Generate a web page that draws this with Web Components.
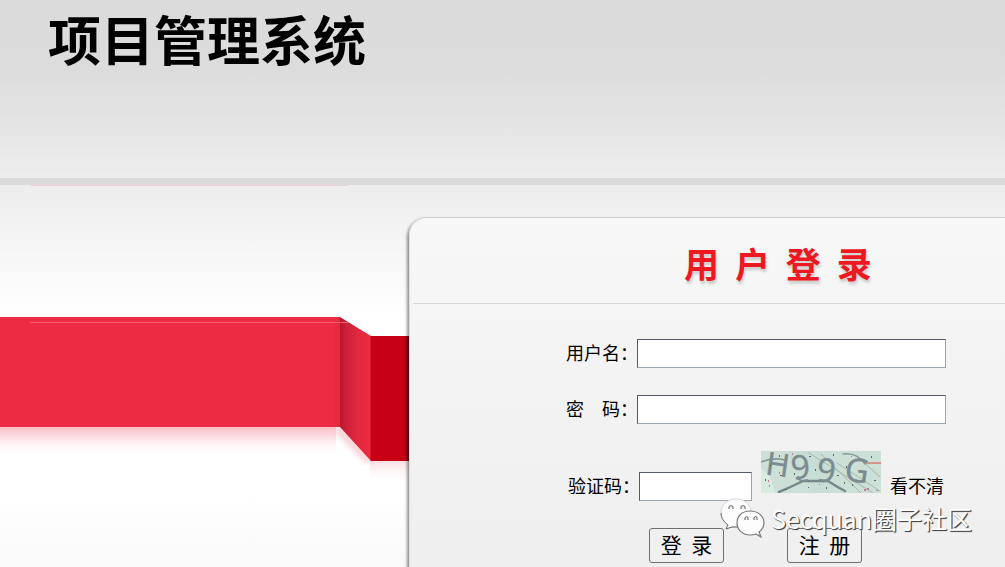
<!DOCTYPE html>
<html lang="zh-CN">
<head>
<meta charset="utf-8">
<title>项目管理系统</title>
<style>
html,body{margin:0;height:100%}
body{font-family:"Noto Sans CJK SC","Liberation Sans",sans-serif;color:#000;overflow:hidden}
</style>
</head>
<body>
<login-page></login-page>

<template id="t-page">
<style>
:host{display:flex;flex-direction:column;min-height:100vh}
main{flex:1;display:grid;grid-template-columns:409px minmax(0,1fr);background:linear-gradient(#ededed,#fff 130px,#fff 310px,#f9f9f9 382px)}
login-card{margin-top:32px}
</style>
<site-header>项目管理系统</site-header>
<main><red-ribbon></red-ribbon><login-card></login-card></main>
</template>

<template id="t-header">
<style>
:host{display:block;box-sizing:border-box;height:185px;padding:0 48px;border-bottom:7px solid #dadada;background:linear-gradient(#dbdbdb,#dcdcdc 70px,#ededed)}
h1{margin:0;font-size:53px;line-height:76px;font-weight:700}
</style>
<h1><slot></slot></h1>
</template>

<template id="t-ribbon">
<style>
:host{display:block}
svg{display:block}
</style>
<svg width="409" height="320" viewBox="0 185 409 320" aria-hidden="true">
  <defs>
    <linearGradient id="fold"><stop offset="0" stop-color="#b9152a"/><stop offset=".25" stop-color="#d0223a"/><stop offset=".65" stop-color="#e5293f"/><stop offset="1" stop-color="#ec2b41"/></linearGradient>
    <linearGradient id="edge"><stop offset="0" stop-color="#d72338" stop-opacity="0"/><stop offset="1" stop-color="#d72338"/></linearGradient>
    <linearGradient id="glow" x2="0" y2="1"><stop offset="0" stop-color="#f8bfc7"/><stop offset=".4" stop-color="#fce6e9"/><stop offset="1" stop-color="#fff" stop-opacity="0"/></linearGradient>
    <linearGradient id="glow2" x2="0" y2="1"><stop offset="0" stop-color="#fbdde0"/><stop offset="1" stop-color="#fff" stop-opacity="0"/></linearGradient>
    <linearGradient id="side"><stop offset="0" stop-color="#222" stop-opacity="0"/><stop offset="1" stop-color="#222" stop-opacity=".45"/></linearGradient>
    <filter id="soft"><feGaussianBlur stdDeviation="3"/></filter>
  </defs>
  <path d="M30 185.500H348" stroke="#efd3d5"/>
  <path d="M0 427H336V458H0Z" fill="url(#glow)"/>
  <path d="M336 427L370 461" stroke="#f8cdd2" stroke-width="8" filter="url(#soft)"/>
  <path d="M370 461H409V483H370Z" fill="url(#glow2)"/>
  <path d="M0 317H340V427H0Z" fill="#ed2b42"/>
  <path d="M334 317H340V427H334Z" fill="url(#edge)" opacity=".4"/>
  <path d="M340 317L371 336V461L340 427Z" fill="url(#fold)"/>
  <path d="M370.500 336H409V461H370.500Z" fill="#c70016"/>
  <path d="M30 322.500H348" stroke="#f1606f"/>
  <path d="M404 336H409V461H404Z" fill="url(#side)"/>
</svg>
</template>

<template id="t-card">
<style>
:host{display:block;position:relative;border-top:1px solid #d2d2d2;border-left:1px solid #ddd;border-top-left-radius:18px;background:linear-gradient(#f8f8f8,#f5f5f5 86px,#f3f3f3 150px,#efefef);box-shadow:-2px 2px 3px rgba(0,0,0,.42)}
h2{box-sizing:border-box;height:86px;margin:0 0 0 3px;padding-left:271px;border-bottom:1px solid #d9d9d9;font-size:35px;line-height:90px;font-weight:700;color:#ee1820;white-space:pre;text-shadow:1px 3px 3px rgba(0,0,0,.18)}
form{display:flex;flex-direction:column;gap:27px;padding:35px 0 4px 156px}
.code{display:flex;align-items:flex-end;gap:9px;padding-left:2px}
.code form-field{margin-bottom:-8px}
.code a{font-size:18px;line-height:32px;color:#000;text-decoration:none;margin-bottom:-8px}
.buttons{display:flex;gap:63px;padding:8px 0 0 83px}
button{width:75px;height:35px;box-sizing:border-box;padding:0 0 4px;border:1px solid #6f6f6f;border-radius:3px;background:#f0f0f0;font:21px/28px "Noto Sans CJK SC",sans-serif;color:#000;white-space:pre}
water-mark{position:absolute;left:310px;top:280px}
</style>
<h2>用  户  登  录</h2>
<form>
  <form-field label="用户名：" type="text"></form-field>
  <form-field label="密　码：" type="password"></form-field>
  <div class="code">
    <form-field label="验证码：" type="text" short></form-field>
    <captcha-image></captcha-image>
    <a href="#">看不清</a>
  </div>
  <div class="buttons"><button type="button">登  录</button><button type="button">注  册</button></div>
</form>
<water-mark>Secquan圈子社区</water-mark>
</template>

<template id="t-field">
<style>
:host{display:flex;align-items:flex-start}
label{width:71px;font-size:18px;line-height:26px;white-space:nowrap}
input{box-sizing:border-box;width:309px;height:29px;padding:2px 4px;border:1px solid;border-color:#555b63 #9aa5b3 #9aa5b3 #555b63;border-radius:0;background:#fff;font-size:18px}
:host([short]) input{width:113px}
</style>
<label for="i"></label><input id="i">
</template>

<template id="t-captcha">
<style>
:host{display:block}
svg{display:block}
text{font-family:"Noto Sans",sans-serif;fill:#7c8b8f;stroke:#7c8b8f;stroke-width:.3px}
</style>
<svg width="120" height="42" viewBox="0 0 120 42" role="img" aria-label="验证码">
  <rect width="120" height="42" fill="#cce0d8"/>
  <path d="M0 18Q10 22 14 42H0Z" fill="#d9ebdf"/>
  <path d="M22 0H60L72 42H55Z" fill="#c3dbd6" opacity=".6"/>
  <g fill="none" stroke-linecap="round">
    <path d="M48 2L112 42M60 3L100 42M76 12L119 40M98 7L119 26" stroke="#a5b8aa" stroke-width="1"/>
    <path d="M0 11Q12 6 24 9M82 3Q96 1 104 13" stroke="#879896" stroke-width="1.500"/>
    <path d="M18 41Q30 36 42 30H67Q76 36 84 40" stroke="#75898b" stroke-width="2.500"/>
    <path d="M37 26Q39 32 46 29" stroke="#7c8b8f" stroke-width="2"/>
    <path d="M105 12H120" stroke="#d77c73" stroke-width="1.500"/>
  </g>
  <text x="5" y="25" font-size="32" transform="rotate(8 16 14)">H</text>
  <text x="30" y="28" font-size="33" transform="rotate(-9 38 16)">9</text>
  <text x="56" y="31" font-size="33" transform="rotate(6 64 18)">9</text>
  <text x="84" y="31" font-size="33" transform="rotate(8 96 20)">G</text>
  <g fill="#526d65">
    <path d="M18 4h1v2h-1zM9 14h1v1h-1zM19 24h2v1h-2zM33 22h1v2h-1zM48 5h2v1h-2zM54 18h1v2h-1zM72 3h1v2h-1zM76 24h2v1h-2zM85 15h1v2h-1zM91 33h1v2h-1zM113 29h2v1h-2zM110 5h1v2h-1zM65 36h1v2h-1zM83 31h1v2h-1zM4 28h1v2h-1zM24 38h2v1h-2zM47 36h1v1h-1z"/>
  </g>
  <path fill="#c678a1" d="M7 29h1v2h-1zM8 34h1v2h-1zM18 21h1v2h-1zM31 2h1v2h-1zM103 38h2v2h-2zM106 37h2v2h-2zM115 39h2v1h-2zM58 33h1v1h-1zM90 5h1v1h-1zM44 13h1v1h-1z"/>
</svg>
</template>

<template id="t-mark">
<style>
:host{display:flex;align-items:center;gap:6px;pointer-events:none}
svg{display:block}
span{font-size:25px;line-height:38px;white-space:nowrap;color:#fff;text-shadow:1px 1px 1px #444,1px 1px 0 #777}
</style>
<svg width="45" height="40" viewBox="0 0 45 40" aria-hidden="true">
  <path d="M16 1C7 1 1 7 1 15C1 20 4 24 8 27L6 31L12 29Q17 30 21 28C30 27 32 20 31 13C30 6 24 1 16 1Z" fill="#fdfdfd" stroke="#d5d5d5"/>
  <path d="M1 15C1 20 4 24 8 27L6 31L12 29H17" fill="none" stroke="#6b6b6b"/>
  <path d="M30 13C22 13 17 18 17 25C17 32 23 37 30 37Q34 37 36 36L41 39L39 34C43 31 44 28 44 25C44 18 38 13 30 13Z" fill="#fdfdfd" stroke="#777" stroke-width="1.200"/>
  <g fill="#eee" stroke="#777" stroke-width="1.200"><path d="M9 11V9Q11 6 13 9V11M21 11V9Q23 6 25 9V11M25 22V20Q27 17 28 20V22M34 22V20Q36 17 37 20V22"/></g>
</svg>
<span><slot></slot></span>
</template>

<script>
function define(name, id, setup) {
  customElements.define(name, class extends HTMLElement {
    constructor() {
      super();
      this.attachShadow({ mode: 'open' }).append(document.getElementById(id).content.cloneNode(true));
    }
    connectedCallback() { if (setup) setup(this); }
  });
}
define('site-header', 't-header');
define('red-ribbon', 't-ribbon');
define('form-field', 't-field', el => {
  el.shadowRoot.querySelector('label').textContent = el.getAttribute('label');
  el.shadowRoot.querySelector('input').type = el.getAttribute('type');
});
define('captcha-image', 't-captcha');
define('water-mark', 't-mark');
define('login-card', 't-card');
define('login-page', 't-page');
</script>
</body>
</html>
